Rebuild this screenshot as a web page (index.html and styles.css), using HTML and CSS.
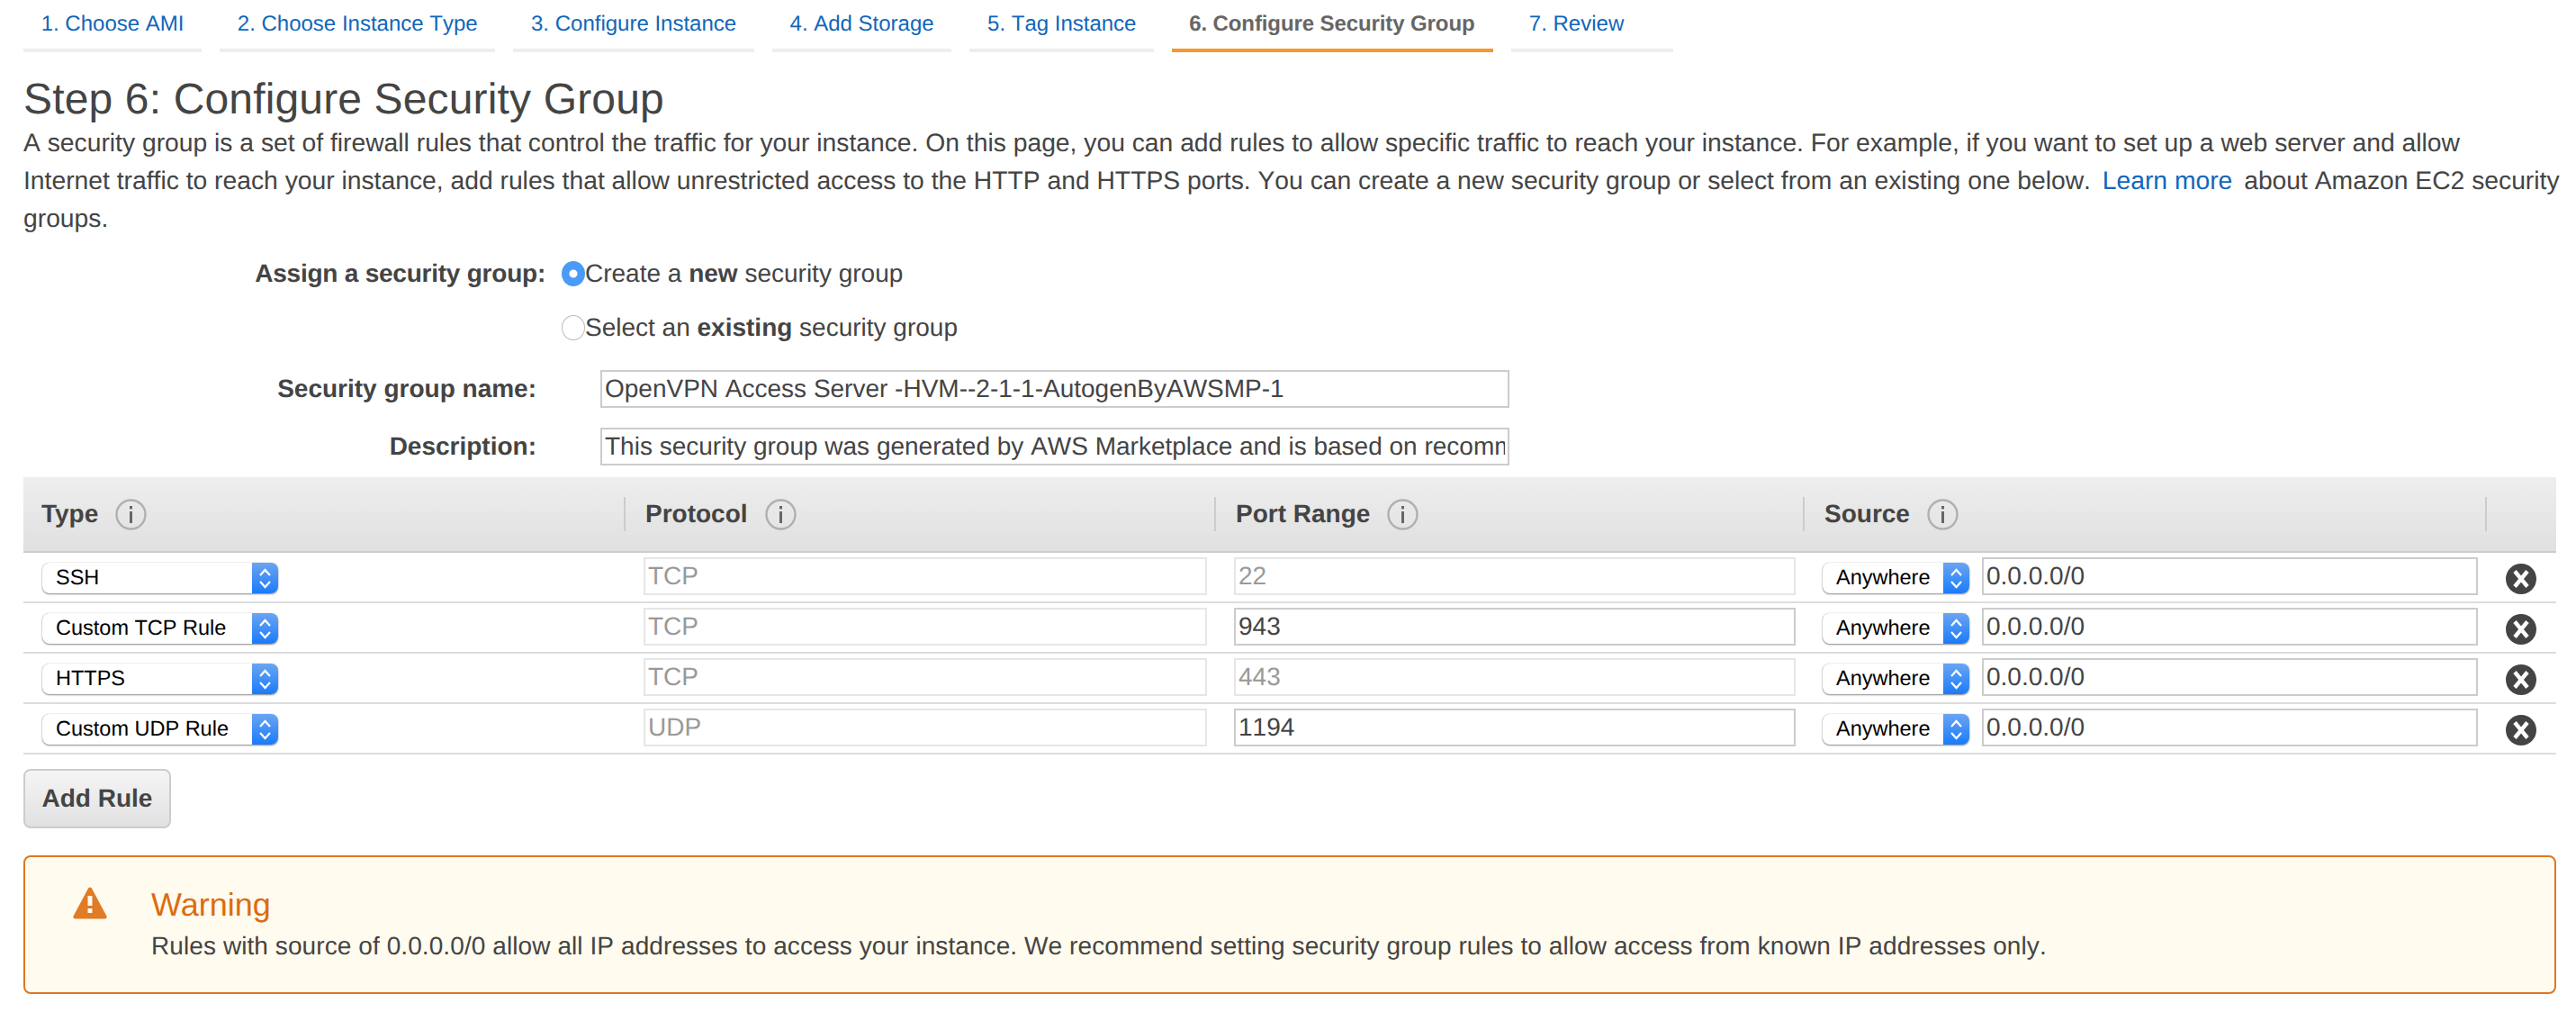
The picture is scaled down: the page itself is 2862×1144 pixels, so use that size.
FILE: index.html
```html
<!DOCTYPE html>
<html lang="en">
<head>
<meta charset="UTF-8">
<title>Step 6: Configure Security Group</title>
<link rel="stylesheet" href="styles.css">
</head>
<body>
<svg class="icon-defs" width="0" height="0">
    <defs>
        <symbol id="icon-info" viewBox="0 0 35 35">
            <circle cx="17.5" cy="17.5" r="16" fill="none" stroke="#b0b0b0" stroke-width="2.4"/>
            <rect x="16" y="8" width="3" height="3.4" fill="#666"/>
            <rect x="16" y="14" width="3" height="13" fill="#666"/>
        </symbol>
        <symbol id="icon-remove" viewBox="0 0 34 34">
            <circle cx="17" cy="17" r="17" fill="#444"/>
            <path d="M10 8.5 L24 25.5 M24 8.5 L10 25.5" stroke="#fff" stroke-width="4.4" fill="none"/>
        </symbol>
        <symbol id="icon-updown" viewBox="0 0 29 34">
            <path d="M9 14 L14.5 8 L20 14 M9 21 L14.5 27 L20 21" stroke="#fff" stroke-width="2.2" fill="none"/>
        </symbol>
    </defs>
</svg>

<!-- Wizard steps -->
<div class="steps">
    <a class="step" href="#">1. Choose AMI</a>
    <a class="step" href="#">2. Choose Instance Type</a>
    <a class="step" href="#">3. Configure Instance</a>
    <a class="step" href="#">4. Add Storage</a>
    <a class="step" href="#">5. Tag Instance</a>
    <a class="step active" href="#">6. Configure Security Group</a>
    <a class="step last" href="#">7. Review</a>
</div>

<h1>Step 6: Configure Security Group</h1>
<p class="intro">A security group is a set of firewall rules that control the traffic for your instance. On this page, you can add rules to allow specific traffic to reach your instance. For example, if you want to set up a web server and allow<br>Internet traffic to reach your instance, add rules that allow unrestricted access to the HTTP and HTTPS ports. You can create a new security group or select from an existing one below. <a class="learn-more" href="#">Learn more</a> about Amazon EC2 security<br>groups.</p>

<!-- Security group form -->
<div class="form">
    <div class="radio-row">
        <span class="form-label assign-label">Assign a security group:</span>
        <label class="radio-label"><input class="radio" type="radio" name="sg" checked>Create a&nbsp;<b>new</b>&nbsp;security group</label>
    </div>
    <div class="radio-row">
        <span class="form-label"></span>
        <label class="radio-label"><input class="radio" type="radio" name="sg">Select an&nbsp;<b>existing</b>&nbsp;security group</label>
    </div>
    <div class="field-row first-field">
        <label class="form-label" for="sgName">Security group name:</label>
        <input class="text-input form-input" type="text" id="sgName" value="OpenVPN Access Server -HVM--2-1-1-AutogenByAWSMP-1">
    </div>
    <div class="field-row">
        <label class="form-label" for="sgDesc">Description:</label>
        <input class="text-input form-input" type="text" id="sgDesc" value="This security group was generated by AWS Marketplace and is based on recommended settings for OpenVPN Access Server">
    </div>
</div>

<!-- Rules table -->
<div class="rules">
    <div class="rules-head">
        <div class="head-cell first"><span>Type</span><svg class="info"><use href="#icon-info"/></svg></div>
        <div class="head-cell"><span>Protocol</span><svg class="info"><use href="#icon-info"/></svg></div>
        <div class="head-cell"><span>Port Range</span><svg class="info"><use href="#icon-info"/></svg></div>
        <div class="head-cell"><span>Source</span><svg class="info"><use href="#icon-info"/></svg></div>
        <div class="head-cell"></div>
    </div>

    <div class="rule-row">
        <div class="type-cell"><div class="select type-select"><span class="select-value">SSH</span><svg class="select-arrows"><use href="#icon-updown"/></svg></div></div>
        <div class="cell"><input class="text-input" type="text" value="TCP" disabled></div>
        <div class="cell"><input class="text-input" type="text" value="22" disabled></div>
        <div class="source-cell"><div class="select source-select"><span class="select-value">Anywhere</span><svg class="select-arrows"><use href="#icon-updown"/></svg></div><input class="text-input" type="text" value="0.0.0.0/0"></div>
        <div class="remove-cell"><svg class="remove"><use href="#icon-remove"/></svg></div>
    </div>
    <div class="rule-row">
        <div class="type-cell"><div class="select type-select"><span class="select-value">Custom TCP Rule</span><svg class="select-arrows"><use href="#icon-updown"/></svg></div></div>
        <div class="cell"><input class="text-input" type="text" value="TCP" disabled></div>
        <div class="cell"><input class="text-input" type="text" value="943"></div>
        <div class="source-cell"><div class="select source-select"><span class="select-value">Anywhere</span><svg class="select-arrows"><use href="#icon-updown"/></svg></div><input class="text-input" type="text" value="0.0.0.0/0"></div>
        <div class="remove-cell"><svg class="remove"><use href="#icon-remove"/></svg></div>
    </div>
    <div class="rule-row">
        <div class="type-cell"><div class="select type-select"><span class="select-value">HTTPS</span><svg class="select-arrows"><use href="#icon-updown"/></svg></div></div>
        <div class="cell"><input class="text-input" type="text" value="TCP" disabled></div>
        <div class="cell"><input class="text-input" type="text" value="443" disabled></div>
        <div class="source-cell"><div class="select source-select"><span class="select-value">Anywhere</span><svg class="select-arrows"><use href="#icon-updown"/></svg></div><input class="text-input" type="text" value="0.0.0.0/0"></div>
        <div class="remove-cell"><svg class="remove"><use href="#icon-remove"/></svg></div>
    </div>
    <div class="rule-row">
        <div class="type-cell"><div class="select type-select"><span class="select-value">Custom UDP Rule</span><svg class="select-arrows"><use href="#icon-updown"/></svg></div></div>
        <div class="cell"><input class="text-input" type="text" value="UDP" disabled></div>
        <div class="cell"><input class="text-input" type="text" value="1194"></div>
        <div class="source-cell"><div class="select source-select"><span class="select-value">Anywhere</span><svg class="select-arrows"><use href="#icon-updown"/></svg></div><input class="text-input" type="text" value="0.0.0.0/0"></div>
        <div class="remove-cell"><svg class="remove"><use href="#icon-remove"/></svg></div>
    </div>
</div>

<button class="add-rule" type="button">Add Rule</button>

<!-- Warning box -->
<div class="warning">
    <svg class="warning-icon" viewBox="0 0 38 37">
        <path d="M19 1.5 C20.2 1.5 20.8 2.2 21.4 3.4 L37.2 33 C38.2 35 37.4 36.5 35.2 36.5 L2.8 36.5 C0.6 36.5 -0.2 35 0.8 33 L16.6 3.4 C17.2 2.2 17.8 1.5 19 1.5 Z" fill="#e07b26"/>
        <rect x="16.5" y="11" width="5" height="11" fill="#fffbee"/>
        <rect x="16.5" y="25" width="5" height="5" fill="#fffbee"/>
    </svg>
    <div class="warning-body">
        <div class="warning-title">Warning</div>
        <div class="warning-text">Rules with source of 0.0.0.0/0 allow all IP addresses to access your instance. We recommend setting security group rules to allow access from known IP addresses only.</div>
    </div>
</div>
</body>
</html>
```

FILE: styles.css
```css
* {
    box-sizing: border-box;
}
body {
    margin: 0;
    padding: 0 22px 0 26px;
    background: #fff;
    color: #444;
    font-family: "Liberation Sans", Arial, sans-serif;
    font-size: 28px;
    line-height: 42px;
    text-rendering: geometricPrecision;
    font-kerning: none;
}
.icon-defs {
    position: absolute;
}

/* wizard steps */
.steps {
    display: flex;
    gap: 20px;
}
.step {
    height: 58px;
    padding: 7px 19.7px 0;
    border-bottom: 4px solid #eee;
    color: #1166bb;
    font-size: 24px;
    line-height: 40px;
    text-decoration: none;
}
.step.active {
    width: 357px;
    padding: 7px 0 0 19px;
    border-bottom-color: #f7982a;
    color: #666;
    font-weight: bold;
    letter-spacing: -0.1px;
    white-space: nowrap;
}
.step.last {
    width: 180px;
}

h1 {
    margin: 26px 0 0;
    color: #444;
    font-size: 48px;
    font-weight: normal;
    line-height: 53px;
    letter-spacing: 0.15px;
}
.intro {
    margin: 0;
    font-size: 28.27px;
    white-space: nowrap;
}
.learn-more {
    margin: 0 5px;
    color: #1166bb;
    text-decoration: none;
}

/* form */
.form {
    padding-top: 27px;
}
.radio-row,
.field-row {
    display: flex;
    align-items: center;
}
.radio-row {
    height: 28px;
    margin-bottom: 32px;
}
.form-label {
    width: 580px;
    font-weight: bold;
    text-align: right;
}
.assign-label {
    letter-spacing: -0.23px;
}
.field-row .form-label {
    width: 570px;
}
.radio-label {
    display: flex;
    align-items: center;
    margin-left: 18px;
}
.radio-label b {
    font-weight: bold;
}
.radio {
    appearance: none;
    width: 26px;
    height: 28px;
    margin: 0;
    border: 1px solid #bbb;
    border-radius: 50%;
    background: #fff;
}
.radio:checked {
    border: none;
    background: radial-gradient(circle, #fff 0, #fff 4px, #4a9bf7 5px);
}
.field-row {
    height: 42px;
    margin-bottom: 22px;
}
.first-field {
    margin-top: 33px;
}
.text-input {
    width: 100%;
    height: 42px;
    padding: 0 3px;
    border: 2px solid #cccccc;
    background: #fff;
    color: #444;
    font-family: inherit;
    font-size: 28px;
    font-kerning: none;
    text-rendering: geometricPrecision;
    outline: none;
}
.text-input:disabled {
    border-color: #e6e6e6;
    color: #999;
}
.form-input {
    width: 1010px;
    margin-left: 71px;
}

/* rules table */
.rules {
    margin-top: -9px;
}
.rules-head,
.rule-row {
    display: grid;
    grid-template-columns: 667px 656px 654px 758px 79px;
}
.rules-head {
    height: 84px;
    padding-top: 22px;
    border-bottom: 2px solid #ccc;
    background: linear-gradient(#eeeeee, #e0e0e0);
}
.head-cell {
    display: flex;
    align-items: center;
    gap: 19px;
    height: 38px;
    padding-left: 22px;
    border-left: 2px solid #ccc;
    font-weight: bold;
    font-kerning: normal;
}
.head-cell.first {
    padding-left: 20px;
    border-left: none;
}
.info {
    width: 35px;
    height: 35px;
}
.rule-row {
    height: 56px;
    padding-top: 5px;
    border-bottom: 2px solid #ddd;
}
.cell {
    padding: 0 8px 0 22px;
}
.type-cell {
    padding: 6px 0 0 21px;
}
.source-cell {
    display: flex;
    gap: 14px;
    padding: 0 8px 0 22px;
}
.select {
    display: flex;
    flex-shrink: 0;
    justify-content: space-between;
    height: 34px;
    margin-top: 6px;
    border-radius: 8px;
    background: #fff;
    box-shadow: 0 1px 2px rgba(0, 0, 0, 0.45), 0 0 1px rgba(0, 0, 0, 0.35);
    color: #000;
    font-size: 23.5px;
    line-height: 33px;
    overflow: hidden;
}
.type-cell .select {
    margin-top: 0;
}
.select-value {
    padding-left: 15px;
    white-space: nowrap;
}
.type-select {
    width: 262px;
}
.source-select {
    width: 163px;
}
.select-arrows {
    width: 29px;
    height: 34px;
    background: linear-gradient(#6aa5f2, #1a7bfa);
}
.remove-cell {
    padding: 7px 0 0 23px;
}
.remove {
    display: block;
    width: 34px;
    height: 34px;
}

.add-rule {
    display: block;
    width: 164px;
    height: 66px;
    margin-top: 16px;
    padding: 0;
    border: 2px solid #ccc;
    border-radius: 8px;
    background: linear-gradient(#f5f5f5, #e1e1e1);
    color: #444;
    font-family: inherit;
    font-size: 28px;
    font-weight: bold;
    text-rendering: geometricPrecision;
    font-kerning: none;
}

/* warning */
.warning {
    display: flex;
    height: 154px;
    margin-top: 30px;
    padding: 32px 0 0 53px;
    border: 2px solid #dd7722;
    border-radius: 8px;
    background: #fffbee;
}
.warning-icon {
    flex-shrink: 0;
    width: 38px;
    height: 37px;
}
.warning-body {
    margin-left: 49px;
}
.warning-title {
    margin-bottom: 4px;
    color: #dd6b10;
    font-size: 36px;
    font-kerning: normal;
}
.warning-text {
    letter-spacing: 0.085px;
}
```
